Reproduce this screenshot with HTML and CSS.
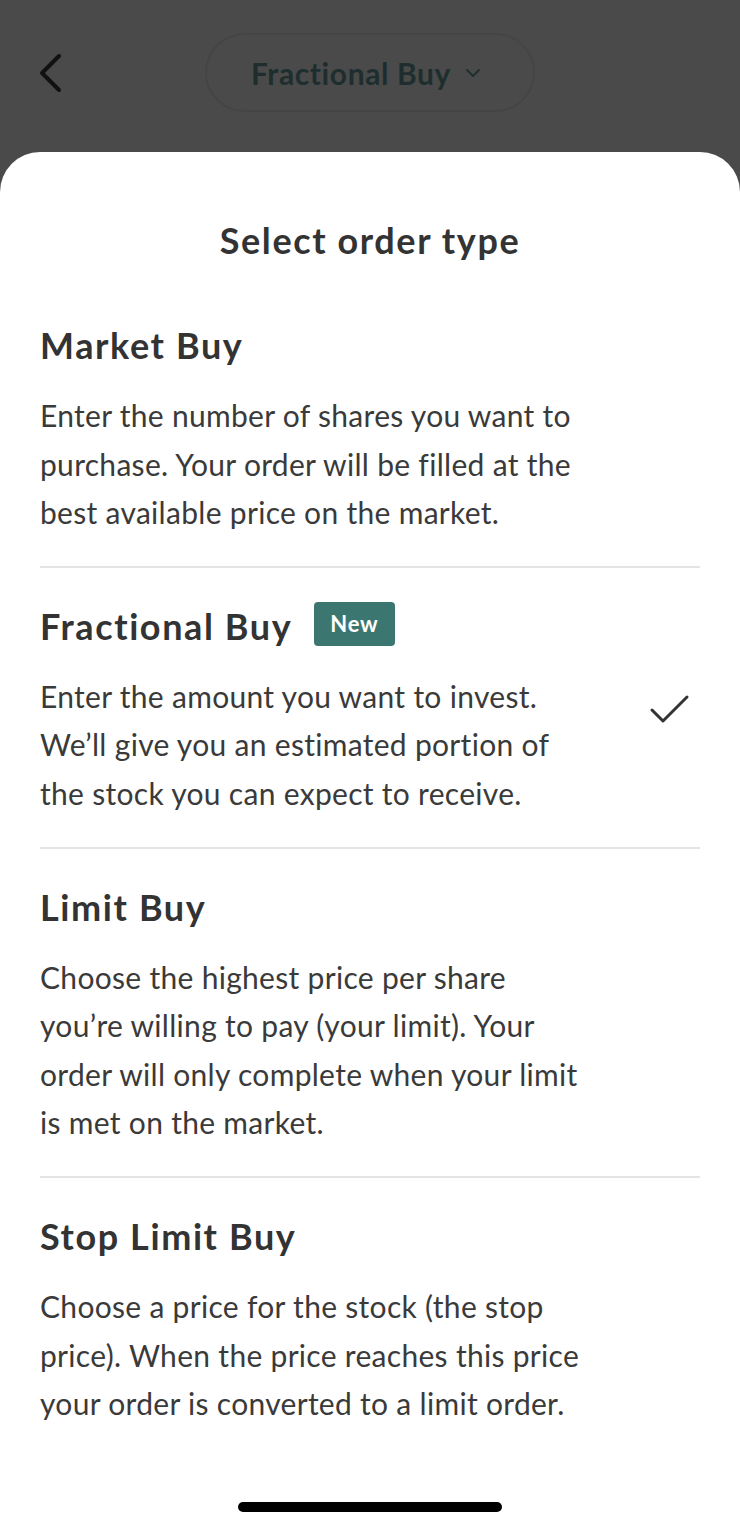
FILE: index.html
```html
<!DOCTYPE html>
<html lang="en">
<head>
    <meta charset="UTF-8">
    <meta name="viewport" content="width=device-width, initial-scale=1.0">
    <title>Select order type</title>
    <link rel="stylesheet" href="styles.css">
</head>
<body>

<div class="screen">
    <div class="topbar">
        <button class="back" aria-label="Back">
            <svg width="30" height="40" viewBox="0 0 30 40">
                <path d="M23 3 L6 20 L23 37" fill="none" stroke="#111" stroke-width="4" stroke-linecap="round" stroke-linejoin="round"/>
            </svg>
        </button>
        <div class="pill">
            <span>Fractional Buy</span>
            <svg width="16" height="10" viewBox="0 0 16 10">
                <path d="M2 2 L8 8 L14 2" fill="none" stroke="#1e2e2e" stroke-width="1.8" stroke-linecap="round" stroke-linejoin="round"/>
            </svg>
        </div>
    </div>

    <div class="sheet">
        <h2 class="sheet-title">Select order type</h2>

        <div class="option">
            <div class="option-head">
                <h3>Market Buy</h3>
            </div>
            <p>Enter the number of shares you want to<br>purchase. Your order will be filled at the<br>best available price on the market.</p>
        </div>

        <div class="option selected">
            <div class="option-head">
                <h3>Fractional Buy</h3>
                <span class="badge">New</span>
            </div>
            <div class="option-body">
                <p>Enter the amount you want to invest.<br>We’ll give you an estimated portion of<br>the stock you can expect to receive.</p>
                <svg class="check" width="44" height="36" viewBox="0 0 44 36">
                    <path d="M4 17 L15 28 L39 4" fill="none" stroke="#333" stroke-width="3" stroke-linecap="round" stroke-linejoin="round"/>
                </svg>
            </div>
        </div>

        <div class="option">
            <div class="option-head">
                <h3>Limit Buy</h3>
            </div>
            <p>Choose the highest price per share<br>you’re willing to pay (your limit). Your<br>order will only complete when your limit<br>is met on the market.</p>
        </div>

        <div class="option last">
            <div class="option-head">
                <h3>Stop Limit Buy</h3>
            </div>
            <p>Choose a price for the stock (the stop<br>price). When the price reaches this price<br>your order is converted to a limit order.</p>
        </div>

        <div class="home-indicator"></div>
    </div>
</div>

</body>
</html>
```

FILE: styles.css
```css
body {
    font-family: Lato, "Noto Sans", sans-serif;
    margin: 0;
    padding: 0;
    background-color: #4a4a4a;
    color: #3a3a3a;
}
.screen {
    width: 740px;
    height: 1528px;
    overflow: hidden;
    display: flex;
    flex-direction: column;
}
.topbar {
    height: 152px;
    display: flex;
    align-items: flex-start;
    padding: 0 36px;
    box-sizing: border-box;
}
.back {
    background: none;
    border: none;
    padding: 0;
    margin-top: 53px;
    width: 30px;
    height: 40px;
}
.pill {
    margin: 33px 0 0 139px;
    width: 330px;
    height: 79px;
    box-sizing: border-box;
    border: 2px solid #454545;
    border-radius: 40px;
    display: flex;
    align-items: center;
    justify-content: center;
    gap: 14px;
    font-size: 30px;
    font-weight: 700;
    letter-spacing: 0.6px;
    color: #1e2e2e;
    padding-right: 8px;
}
.sheet {
    flex: 1;
    background-color: #fff;
    border-radius: 40px 40px 0 0;
    padding: 66px 40px 0 40px;
    display: flex;
    flex-direction: column;
}
.sheet-title {
    margin: 0 0 25px 0;
    text-align: center;
    font-size: 36px;
    line-height: 44px;
    font-weight: 700;
    letter-spacing: 1.6px;
    color: #333;
}
.option {
    padding: 36px 0 29px 0;
    border-bottom: 2px solid #e4e4e4;
}
.option.last {
    border-bottom: none;
}
.option-head {
    display: flex;
    align-items: center;
    gap: 22px;
    height: 44px;
}
.option h3 {
    margin: 0;
    font-size: 36px;
    line-height: 44px;
    font-weight: 700;
    letter-spacing: 1.6px;
    color: #333;
}
.option p {
    margin: 24px 0 0 0;
    font-size: 30px;
    line-height: 48.6px;
    letter-spacing: 0.3px;
    color: #3a3a3a;
}
.badge {
    background-color: #3c7670;
    color: #fff;
    font-size: 22px;
    font-weight: 700;
    letter-spacing: 0.8px;
    padding: 0 16px;
    height: 44px;
    line-height: 44px;
    border-radius: 4px;
    margin-top: -4px;
}
.option-body {
    display: flex;
    justify-content: space-between;
    align-items: flex-start;
}
.check {
    margin-top: 45px;
    margin-right: 8px;
}
.home-indicator {
    margin: auto auto 16px auto;
    width: 264px;
    height: 10px;
    border-radius: 5px;
    background-color: #000;
}
```
